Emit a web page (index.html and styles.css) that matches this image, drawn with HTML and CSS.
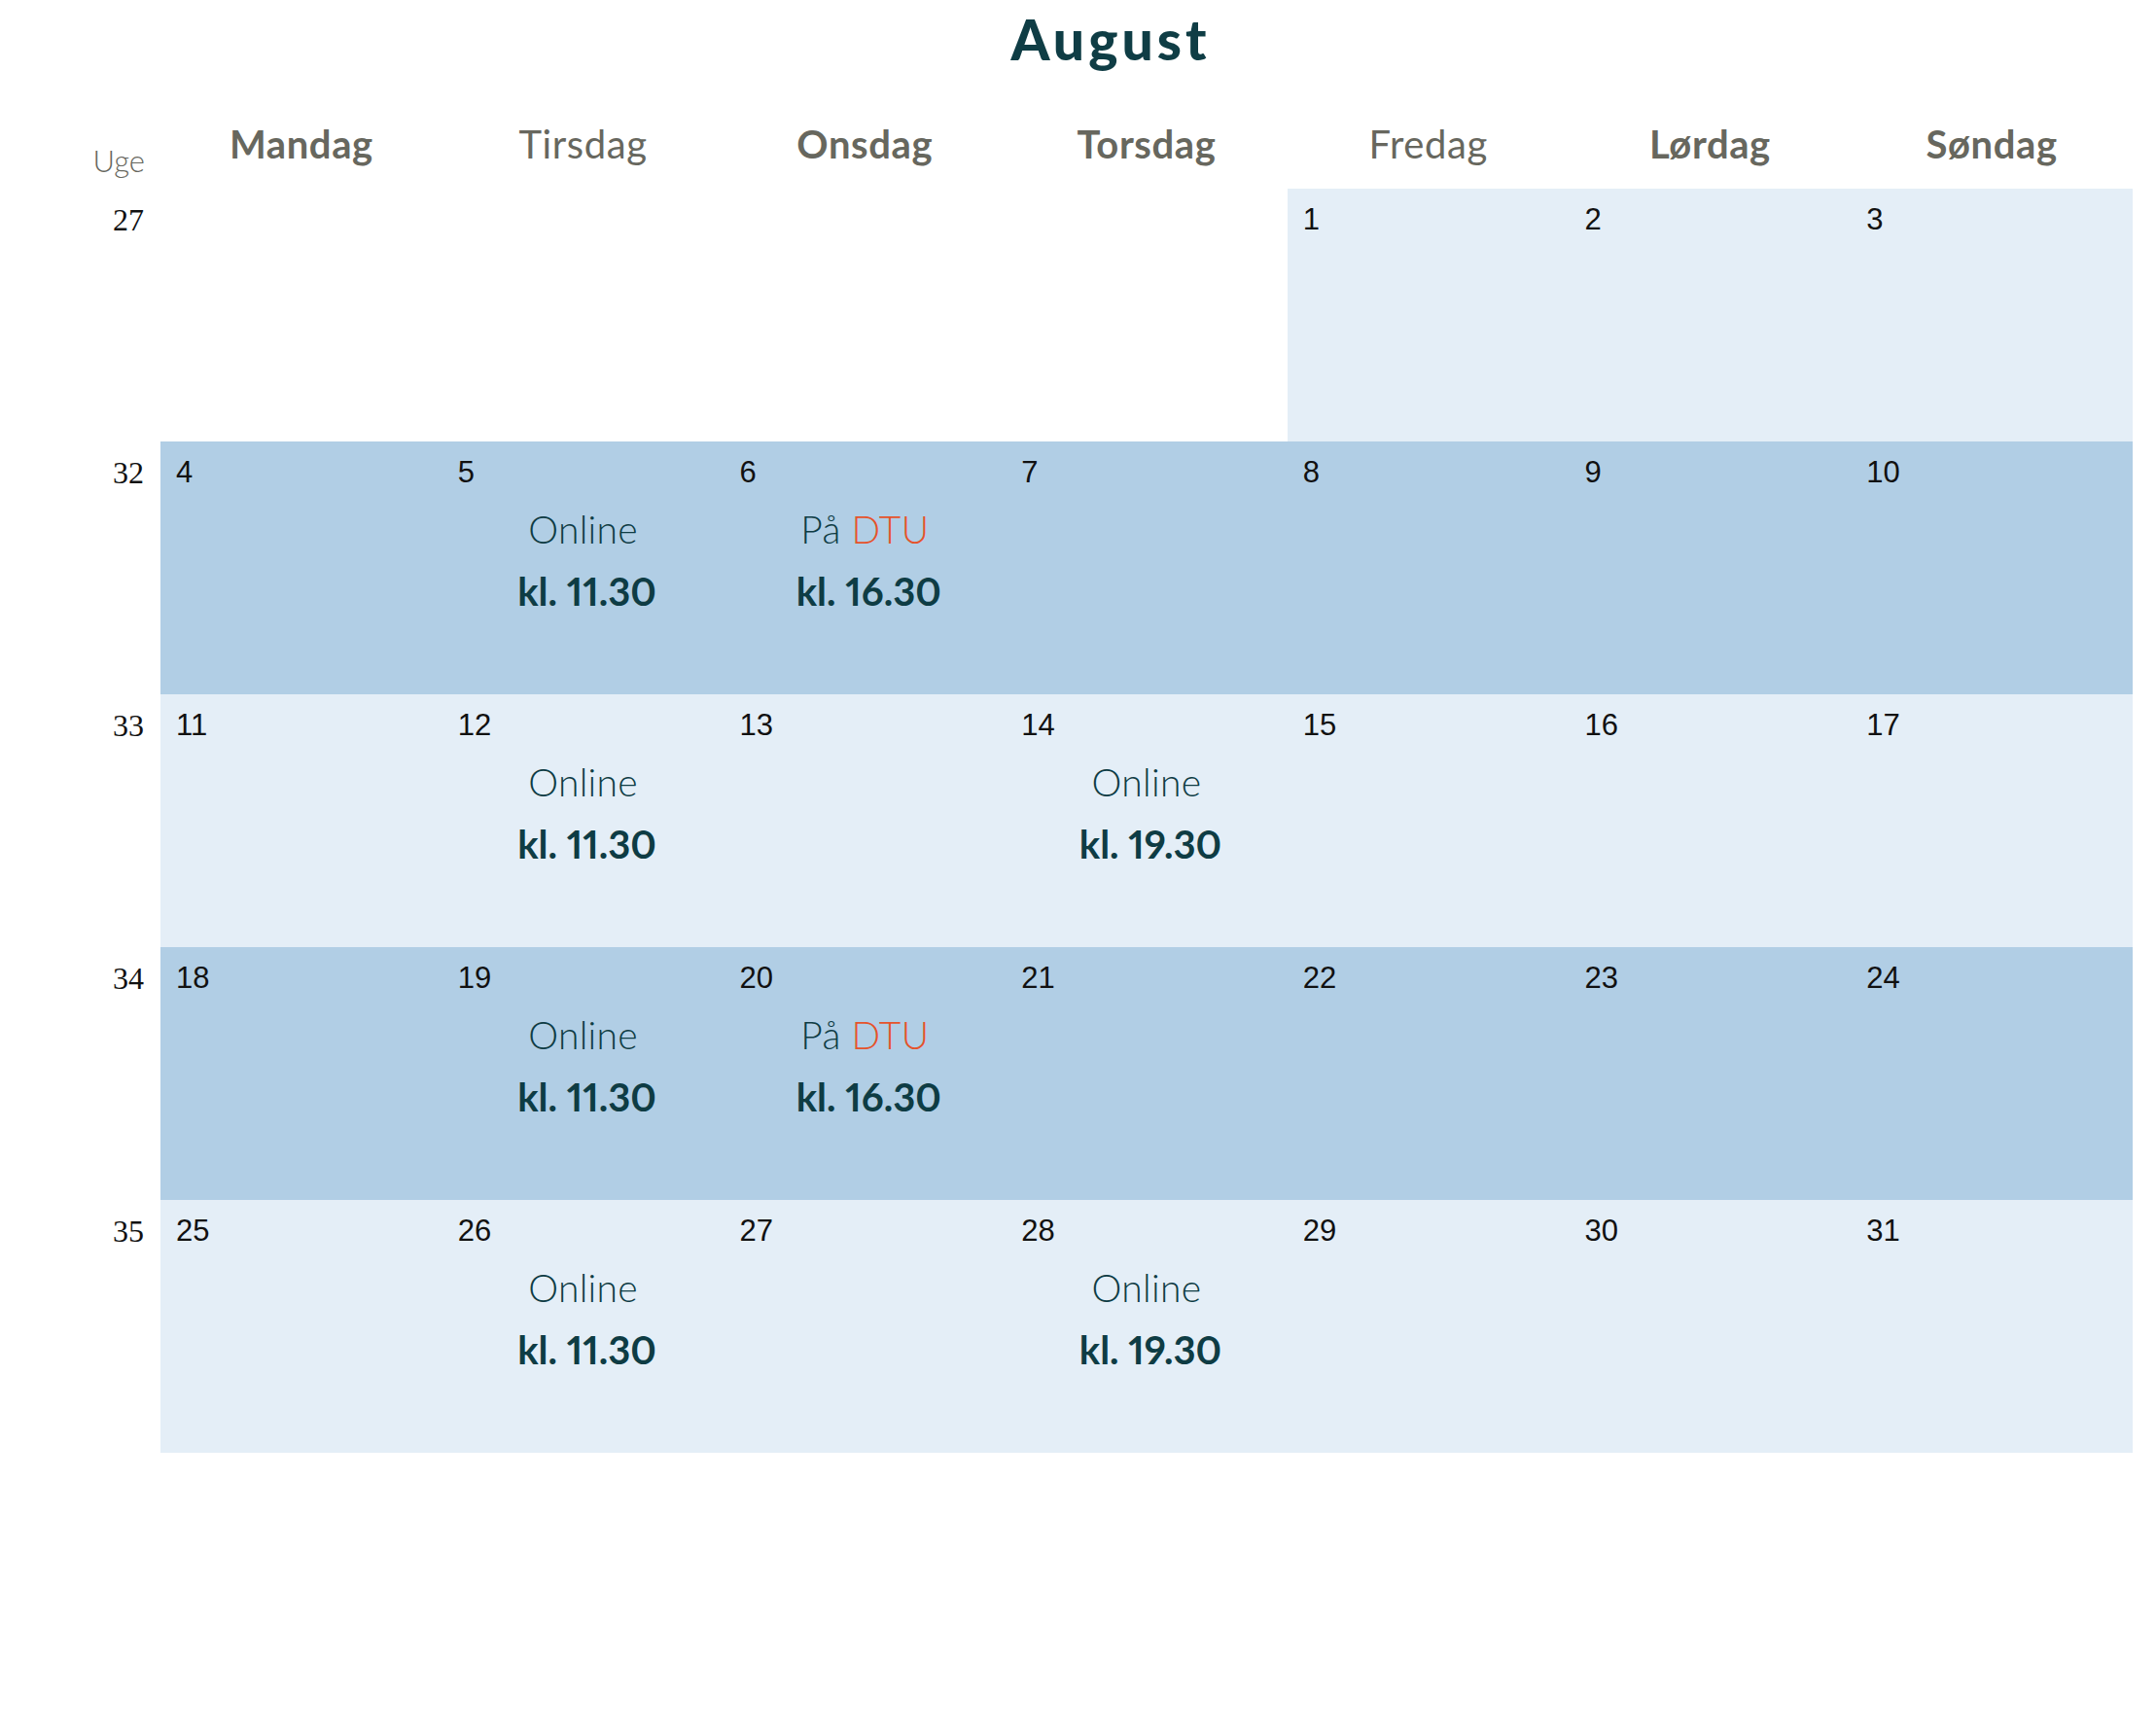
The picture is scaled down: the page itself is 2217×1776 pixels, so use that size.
FILE: index.html
```html
<!DOCTYPE html>
<html lang="da">
<head>
<meta charset="utf-8">
<title>August</title>
<link rel="stylesheet" href="styles.css">
</head>
<body>
<div class="cal">
  <h1 class="title">August</h1>
  <div class="grid">
    <div class="hd week-hd">Uge</div>
    <div class="hd bold">Mandag</div>
    <div class="hd">Tirsdag</div>
    <div class="hd bold">Onsdag</div>
    <div class="hd bold">Torsdag</div>
    <div class="hd">Fredag</div>
    <div class="hd bold">Lørdag</div>
    <div class="hd bold">Søndag</div>

    <div class="wk">27</div>
    <div class="cell"></div>
    <div class="cell"></div>
    <div class="cell"></div>
    <div class="cell"></div>
    <div class="cell light"><div class="num">1</div></div>
    <div class="cell light"><div class="num">2</div></div>
    <div class="cell light"><div class="num">3</div></div>

    <div class="wk">32</div>
    <div class="cell dark"><div class="num">4</div></div>
    <div class="cell dark"><div class="num">5</div><div class="ev"><div class="place">Online</div><div class="time">kl. 11.30</div></div></div>
    <div class="cell dark"><div class="num">6</div><div class="ev"><div class="place">På <span class="dtu">DTU</span></div><div class="time">kl. 16.30</div></div></div>
    <div class="cell dark"><div class="num">7</div></div>
    <div class="cell dark"><div class="num">8</div></div>
    <div class="cell dark"><div class="num">9</div></div>
    <div class="cell dark"><div class="num">10</div></div>

    <div class="wk">33</div>
    <div class="cell light"><div class="num">11</div></div>
    <div class="cell light"><div class="num">12</div><div class="ev"><div class="place">Online</div><div class="time">kl. 11.30</div></div></div>
    <div class="cell light"><div class="num">13</div></div>
    <div class="cell light"><div class="num">14</div><div class="ev"><div class="place">Online</div><div class="time">kl. 19.30</div></div></div>
    <div class="cell light"><div class="num">15</div></div>
    <div class="cell light"><div class="num">16</div></div>
    <div class="cell light"><div class="num">17</div></div>

    <div class="wk">34</div>
    <div class="cell dark"><div class="num">18</div></div>
    <div class="cell dark"><div class="num">19</div><div class="ev"><div class="place">Online</div><div class="time">kl. 11.30</div></div></div>
    <div class="cell dark"><div class="num">20</div><div class="ev"><div class="place">På <span class="dtu">DTU</span></div><div class="time">kl. 16.30</div></div></div>
    <div class="cell dark"><div class="num">21</div></div>
    <div class="cell dark"><div class="num">22</div></div>
    <div class="cell dark"><div class="num">23</div></div>
    <div class="cell dark"><div class="num">24</div></div>

    <div class="wk">35</div>
    <div class="cell light"><div class="num">25</div></div>
    <div class="cell light"><div class="num">26</div><div class="ev"><div class="place">Online</div><div class="time">kl. 11.30</div></div></div>
    <div class="cell light"><div class="num">27</div></div>
    <div class="cell light"><div class="num">28</div><div class="ev"><div class="place">Online</div><div class="time">kl. 19.30</div></div></div>
    <div class="cell light"><div class="num">29</div></div>
    <div class="cell light"><div class="num">30</div></div>
    <div class="cell light"><div class="num">31</div></div>
  </div>
</div>
</body>
</html>
```
FILE: styles.css
```css
html, body {
  margin: 0;
  padding: 0;
  background: #ffffff;
}
body {
  font-family: Lato, "Noto Sans", sans-serif;
}
.cal {
  margin-left: 91px;
  width: 2102px;
}
.title {
  margin: 0;
  height: 74px;
  box-sizing: border-box;
  padding-top: 7px;
  font-size: 57px;
  line-height: 67px;
  font-weight: 900;
  letter-spacing: 4px;
  color: #0f3d45;
  text-align: center;
}
.grid {
  display: grid;
  grid-template-columns: 74px repeat(7, 1fr);
}
.hd {
  height: 120px;
  box-sizing: border-box;
  padding-top: 50px;
  font-size: 40px;
  line-height: 48px;
  font-weight: 400;
  letter-spacing: 0.6px;
  color: #67675e;
  text-align: center;
}
.hd.bold {
  font-weight: 700;
}
.week-hd {
  padding-top: 73px;
  padding-right: 16px;
  font-size: 31px;
  line-height: 36px;
  font-weight: 300;
  letter-spacing: 0;
  text-align: right;
}
.wk {
  height: 260px;
  box-sizing: border-box;
  padding-top: 14px;
  padding-right: 17px;
  font-family: "Liberation Serif", serif;
  font-size: 32px;
  line-height: 36px;
  color: #111111;
  text-align: right;
}
.cell {
  height: 260px;
  box-sizing: border-box;
  display: flex;
  flex-direction: column;
}
.light {
  background: #e4eef7;
}
.dark {
  background: #b1cee5;
}
.num {
  padding: 14px 0 0 16px;
  font-family: "Liberation Sans", Arial, sans-serif;
  font-size: 31px;
  line-height: 36px;
  color: #111111;
}
.ev {
  text-align: center;
  color: #0e3c44;
}
.place {
  margin-top: 17px;
  font-size: 39px;
  line-height: 46px;
  font-weight: 300;
  letter-spacing: 0.3px;
}
.dtu {
  color: #e5532b;
}
.time {
  margin-top: 17px;
  padding-left: 8px;
  font-size: 40px;
  line-height: 48px;
  font-weight: 700;
  letter-spacing: 0;
  font-variant-numeric: proportional-nums;
}
```
